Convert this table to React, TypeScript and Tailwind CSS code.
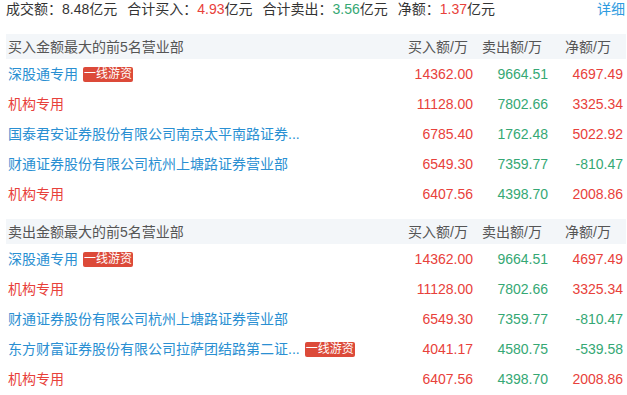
import React from "react";

type Row = {
  name: string;
  color: "blue" | "red";
  badge?: boolean;
  buy: string;
  sell: string;
  net: string;
};

const buyRows: Row[] = [
  { name: "深股通专用", color: "blue", badge: true, buy: "14362.00", sell: "9664.51", net: "4697.49" },
  { name: "机构专用", color: "red", buy: "11128.00", sell: "7802.66", net: "3325.34" },
  { name: "国泰君安证券股份有限公司南京太平南路证券...", color: "blue", buy: "6785.40", sell: "1762.48", net: "5022.92" },
  { name: "财通证券股份有限公司杭州上塘路证券营业部", color: "blue", buy: "6549.30", sell: "7359.77", net: "-810.47" },
  { name: "机构专用", color: "red", buy: "6407.56", sell: "4398.70", net: "2008.86" },
];

const sellRows: Row[] = [
  { name: "深股通专用", color: "blue", badge: true, buy: "14362.00", sell: "9664.51", net: "4697.49" },
  { name: "机构专用", color: "red", buy: "11128.00", sell: "7802.66", net: "3325.34" },
  { name: "财通证券股份有限公司杭州上塘路证券营业部", color: "blue", buy: "6549.30", sell: "7359.77", net: "-810.47" },
  { name: "东方财富证券股份有限公司拉萨团结路第二证...", color: "blue", badge: true, buy: "4041.17", sell: "4580.75", net: "-539.58" },
  { name: "机构专用", color: "red", buy: "6407.56", sell: "4398.70", net: "2008.86" },
];

function Section({ title, rows }: { title: string; rows: Row[] }) {
  return (
    <div>
      <div className="flex h-[25px] items-center bg-[#f3f6f9] pr-[3px] text-[#555]">
        <div className="flex-1 pl-[2px]">{title}</div>
        <div className="w-[75px] pr-[5px] text-right">买入额/万</div>
        <div className="w-[75px] pr-[6px] text-right">卖出额/万</div>
        <div className="w-[75px] pr-[12px] text-right">净额/万</div>
      </div>
      {rows.map((r, i) => (
        <div key={i} className="flex h-[30px] items-center pr-[3px]">
          <div className="flex flex-1 items-center pl-[2px]">
            <span className={r.color === "blue" ? "text-[#2a8fd2]" : "text-[#e8413b]"}>{r.name}</span>
            {r.badge && (
              <span className="ml-[5px] h-[15px] rounded-[2px] bg-[#dc4a39] px-[1px] text-[12px] leading-[15px] text-white">
                一线游资
              </span>
            )}
          </div>
          <div className="w-[75px] text-right text-[#e8413b]">{r.buy}</div>
          <div className="w-[75px] text-right text-[#35a874]">{r.sell}</div>
          <div className={"w-[75px] text-right " + (r.net.startsWith("-") ? "text-[#35a874]" : "text-[#e8413b]")}>
            {r.net}
          </div>
        </div>
      ))}
    </div>
  );
}

export default function App() {
  return (
    <div
      className="h-[395px] w-[627px] bg-white pl-[6px] pr-[1px] text-[14px] leading-[18px] text-[#333]"
      style={{ fontFamily: '"Liberation Sans", "Noto Sans CJK SC", sans-serif' }}
    >
      <div className="flex h-[34px] items-start">
        <span>
          成交额：<span>8.48</span>亿元
        </span>
        <span className="ml-[10px]">
          合计买入：<span className="text-[#e8413b]">4.93</span>亿元
        </span>
        <span className="ml-[10px]">
          合计卖出：<span className="text-[#35a874]">3.56</span>亿元
        </span>
        <span className="ml-[10px]">
          净额：<span className="text-[#e8413b]">1.37</span>亿元
        </span>
        <span className="ml-auto mr-[1px] text-[#2d9be0]">详细</span>
      </div>
      <Section title="买入金额最大的前5名营业部" rows={buyRows} />
      <div className="h-[10px]" />
      <Section title="卖出金额最大的前5名营业部" rows={sellRows} />
    </div>
  );
}
